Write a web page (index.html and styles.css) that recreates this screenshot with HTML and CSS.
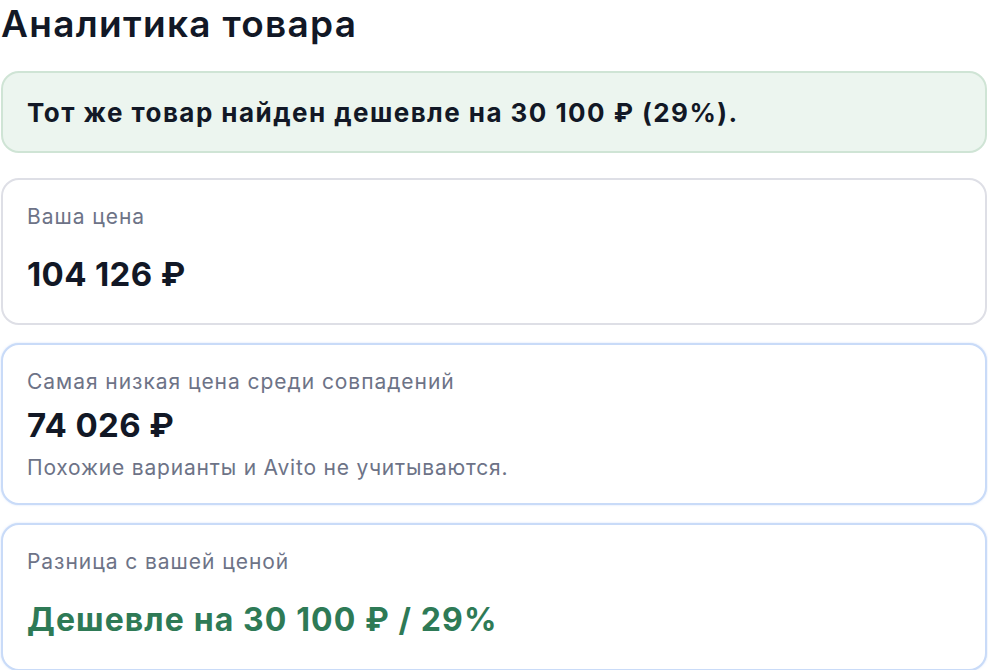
FILE: index.html
```html
<!DOCTYPE html>
<html lang="ru">
<head>
<meta charset="utf-8">
<title>Аналитика товара</title>
<link rel="stylesheet" href="styles.css">
</head>
<body>
<main class="analytics">
  <h1 class="analytics__title">Аналитика товара</h1>
  <div class="alert">Тот же товар найден дешевле на 30 100 ₽ (29%).</div>
  <section class="card card--plain">
    <div class="card__label">Ваша цена</div>
    <div class="card__value card__value--spaced">104 126 ₽</div>
  </section>
  <section class="card card--accent card--compact">
    <div class="card__label">Самая низкая цена среди совпадений</div>
    <div class="card__value card__value--tight">74 026 ₽</div>
    <div class="card__note">Похожие варианты и Avito не учитываются.</div>
  </section>
  <section class="card card--accent">
    <div class="card__label">Разница с вашей ценой</div>
    <div class="card__value card__value--good card__value--spaced">Дешевле на 30 100 ₽ / 29%</div>
  </section>
</main>
</body>
</html>
```
FILE: styles.css
```css
* { box-sizing: border-box; }

html, body {
  margin: 0;
  padding: 0;
  background: #ffffff;
}

body {
  font-family: "Inter", "Noto Sans", sans-serif;
  color: #121826;
}

.analytics {
  display: flex;
  flex-direction: column;
  padding: 0 1px;
}

.analytics__title {
  margin: 0 0 23px 0;
  font-size: 37px;
  font-weight: 600;
  line-height: 48px;
  letter-spacing: 1.3px;
  color: #121826;
}

.alert {
  height: 82px;
  display: flex;
  align-items: center;
  padding: 0 24px;
  margin-bottom: 25px;
  border: 2px solid #cfe4d5;
  border-radius: 18px;
  background: #ecf5ef;
  font-size: 26px;
  font-weight: 700;
  letter-spacing: 1.45px;
  color: #121826;
}

.card {
  display: flex;
  flex-direction: column;
  padding: 22px 24px 27px;
  margin-bottom: 18px;
  border: 2px solid #dedfe6;
  border-radius: 18px;
  background: #ffffff;
}

.card--accent {
  border-color: #c9dbf8;
  box-shadow: 0 0 2px rgba(170, 198, 245, 0.6);
}

.card--compact {
  padding-bottom: 21px;
}

.card__label {
  font-size: 21px;
  font-weight: 400;
  line-height: 30px;
  color: #6d7387;
  letter-spacing: 0.95px;
}

.card__value {
  font-size: 33px;
  font-weight: 700;
  line-height: 44px;
  color: #121826;
  letter-spacing: 0.35px;
}

.card__value--spaced {
  margin-top: 20px;
}

.card__value--tight {
  margin-top: 6px;
}

.card__value--good {
  margin-top: 21px;
  font-size: 32px;
  letter-spacing: 1.1px;
  color: #2e7a56;
}

.card__note {
  margin-top: 7px;
  font-size: 21px;
  line-height: 28px;
  color: #6d7387;
  letter-spacing: 0.8px;
}
```
